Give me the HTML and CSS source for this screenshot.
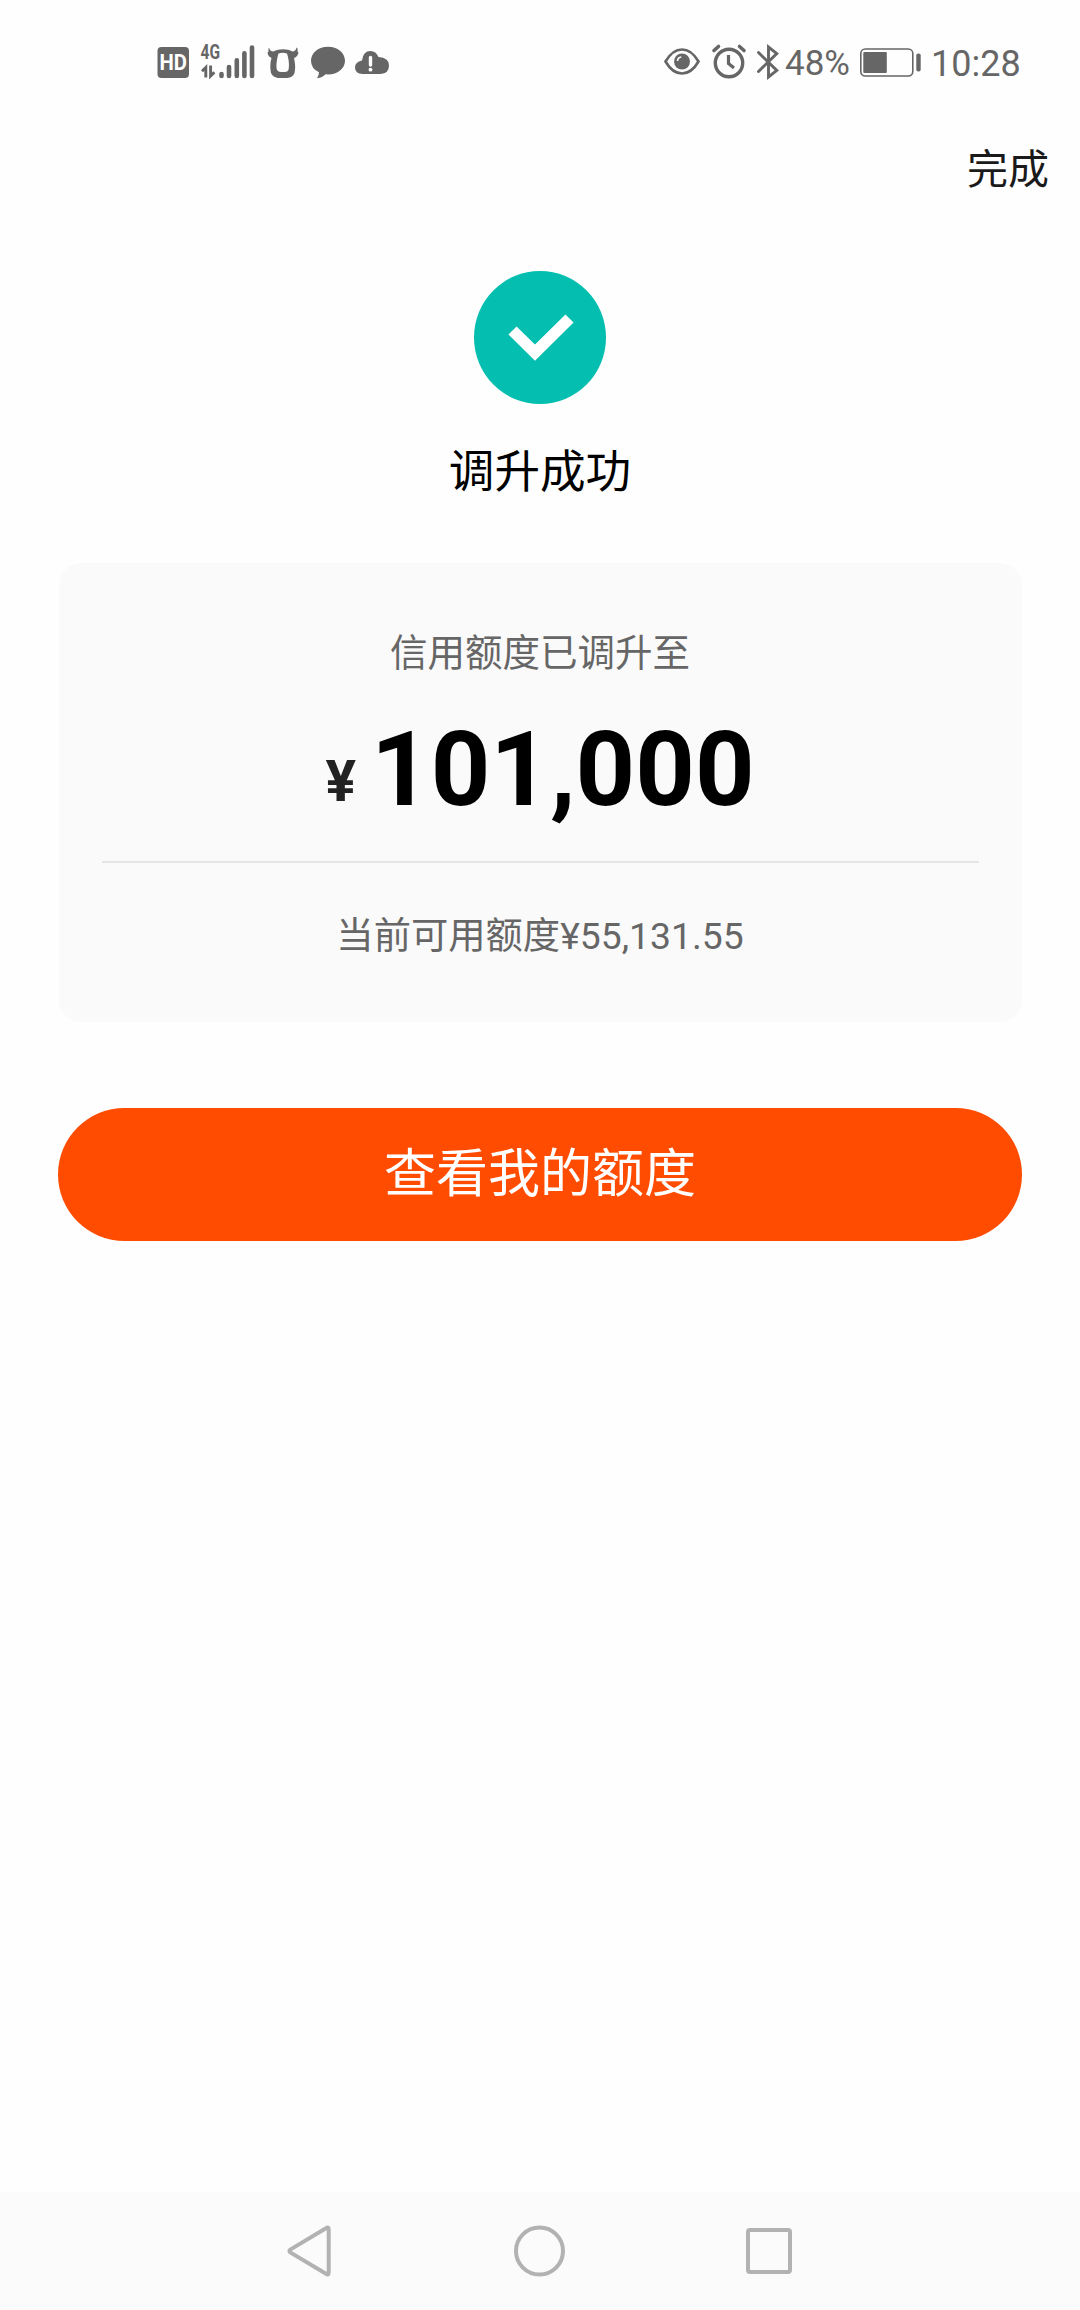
FILE: index.html
```html
<!DOCTYPE html>
<html lang="zh-CN">
<head>
<meta charset="utf-8">
<title>调升成功</title>
<link rel="stylesheet" href="styles.css">
</head>
<body>
<div class="screen">
  <header class="status">
    <div class="status-left">
      <svg class="icon hd" width="32" height="34" viewBox="0 0 32 34"><rect x="0.500" y="2" width="31.500" height="31" rx="4" fill="#666"/><text x="2.500" y="25" font-size="22" textLength="27.500" lengthAdjust="spacingAndGlyphs" fill="#fff">HD</text></svg>
      <svg class="icon signal" width="54" height="34" viewBox="0 0 54 34"><text x="-0.500" y="14.300" font-size="20" textLength="19.500" lengthAdjust="spacingAndGlyphs" fill="#666">4G</text><path d="M4.800 32.500V22.500L1 26.300M9.600 20.500V31L13.400 27.200" fill="none" stroke="#666" stroke-width="2.900"/><g stroke="#666" stroke-width="4.600" stroke-linecap="round"><path d="M20.500 29v2M28 22v9M35.800 15.300V31M43.400 8.300V31M51 2.500V31"/></g></svg>
      <svg class="icon ox" width="32" height="34" viewBox="0 0 32 34"><path fill="#666" fill-rule="evenodd" d="M2 2.500C2.500 5 4 6.500 6.500 6.500C12 3.500 20 3.500 25.500 6.500C27.500 6.500 29 5 29.500 2.500Q31 3 30.500 6.500L31.500 7.500C31 10 29.500 12.500 27 13C28.500 20 28.500 24 27.500 28Q26 32.500 20 33H11Q5.500 32 4 28C3 23 3 18 4.500 13Q1 11.500 0.500 7.500L1.500 6.500Q1 3.500 2 2.500ZM11.500 8.500C10 13 9 20 9.700 24Q10.500 27 14 27H18Q21 27 21.700 24C22.500 19 21.500 13 20 8.500Q15.500 7 11.500 8.500Z"/></svg>
      <svg class="icon chat" width="34" height="34" viewBox="0 0 34 34"><path fill="#666" d="M17 1.700C26.500 1.700 34 7.800 34 15.700S26.500 29.500 17 29.500L14.500 29.300Q11.500 32.700 6 33.300Q8 30.500 8 27.300Q0 23.500 0 15.700C0 7.800 7.500 1.700 17 1.700Z"/></svg>
      <svg class="icon cloud" width="34" height="34" viewBox="0 0 34 34"><path fill="#666" d="M7.500 29Q0 28.500 0 22.500Q0 17 7 15.500Q8 6 15.500 6Q21 6 23.500 12Q34 12.500 34 20.500Q34 28.500 25.500 29Z"/><path d="M15.500 12.500V20" stroke="#fff" stroke-width="3.400" stroke-linecap="round"/><circle cx="15.500" cy="24.700" r="1.900" fill="#fff"/></svg>
    </div>
    <div class="status-right">
      <svg class="icon eye" width="36" height="34" viewBox="0 0 36 34"><path d="M1.500 16.500Q8.500 4.500 18 4.500T34.500 16.500Q27.500 28.500 18 28.500T1.500 16.500Z" fill="none" stroke="#666" stroke-width="2.700"/><circle cx="18" cy="16.500" r="8" fill="#666"/><path d="M13.500 16Q13.800 12.300 17.300 12" fill="none" stroke="#fff" stroke-width="1.600"/></svg>
      <svg class="icon alarm" width="34" height="34" viewBox="0 0 34 34"><circle cx="17" cy="18" r="13.700" fill="none" stroke="#666" stroke-width="3.400"/><path d="M16.500 10V18.500L22 23" fill="none" stroke="#666" stroke-width="3.200"/><path d="M2 5.500L6.500 1.500M27.500 1.500L32 5.500" stroke="#666" stroke-width="3.600" stroke-linecap="round"/></svg>
      <svg class="icon bluetooth" width="22" height="36" viewBox="0 0 22 36"><path d="M1.500 8.500L19.800 26.500L11.500 33V3L19.800 9.500L1.500 27.500" fill="none" stroke="#666" stroke-width="2.900" stroke-linejoin="miter" stroke-linecap="round"/></svg>
      <span class="percent">48%</span>
      <svg class="icon battery" width="62" height="34" viewBox="0 0 62 34"><rect x=".8" y="4" width="52" height="27" rx="4.500" fill="none" stroke="#666" stroke-width="1.600"/><rect x="3.300" y="7" width="23.500" height="21" rx="1" fill="#666"/><rect x="56.300" y="8.500" width="4.400" height="18" rx="2" fill="#666"/></svg>
      <span class="clock">10:28</span>
    </div>
  </header>

  <nav class="topbar"><a class="done">完成</a></nav>

  <main class="content">
    <svg class="success" width="132" height="133" viewBox="0 0 132 133"><ellipse cx="66" cy="66.500" rx="66" ry="66.500" fill="#04beaf"/><path d="M38.500 59.500L61 81.700L95.500 47.500" fill="none" stroke="#fff" stroke-width="11.500"/></svg>
    <h1 class="title">调升成功</h1>
    <section class="card">
      <p class="label">信用额度已调升至</p>
      <p class="amount"><span class="yen">¥</span><span class="value">101,000</span></p>
      <p class="available">当前可用额度¥55,131.55</p>
    </section>
    <button class="primary">查看我的额度</button>
  </main>

  <footer class="navbar">
    <svg width="44" height="52" viewBox="0 0 44 52"><path d="M41.700 4.500V47.500Q41.700 50.500 39 48.800L3.200 27.400Q1.700 26 3.200 24.600L39 3.200Q41.700 1.500 41.700 4.500Z"/></svg>
    <svg width="52" height="52" viewBox="0 0 52 52"><ellipse cx="26.500" cy="26" rx="23.500" ry="23.500"/></svg>
    <svg width="46" height="46" viewBox="0 0 46 46"><rect x="2" y="2" width="42" height="42" rx="2"/></svg>
  </footer>
</div>
</body>
</html>
```
FILE: styles.css
```css
* { box-sizing: border-box; margin: 0; padding: 0; }

body {
  background: #fefefe;
  font-family: Roboto, "Noto Sans CJK SC", sans-serif;
  color: #000;
}

.screen {
  width: 1080px;
  height: 2310px;
  display: flex;
  flex-direction: column;
}

.status {
  height: 124px;
  padding: 45px 61px 0 157px;
  display: flex;
  justify-content: space-between;
  align-items: flex-start;
  color: #666;
}

.status-left, .status-right { display: flex; height: 34px; }
.icon { flex: none; display: block; overflow: visible; }
.icon text { font-weight: 700; }
.signal { margin-left: 12px; }
.ox { margin-left: 12px; }
.chat { margin-left: 12px; }
.cloud { margin-left: 10px; }
.alarm { margin-left: 12px; }
.bluetooth { margin-left: 11px; margin-top: -1px; }
.percent { width: 66px; margin-left: 6px; font-size: 35px; line-height: 38px; }
.battery { margin-left: 9px; }
.clock { width: 88px; margin-left: 9px; font-size: 36px; line-height: 38px; white-space: nowrap; }

.topbar {
  height: 92px;
  display: flex;
  justify-content: flex-end;
  padding: 16px 31px 0 0;
}
.done { font-size: 41px; line-height: 60px; color: #1a1a1a; }

.content {
  flex: 1;
  display: flex;
  flex-direction: column;
  align-items: center;
  padding: 55px 58px 0;
}
.success { flex: none; display: block; }
.title {
  margin-top: 36px;
  font-size: 45.6px;
  line-height: 66px;
  font-weight: 400;
}

.card {
  width: 963px;
  height: 459px;
  margin-top: 57px;
  padding: 63px 43px 0;
  border-radius: 22px;
  background: #fafafa;
  display: flex;
  flex-direction: column;
  text-align: center;
  color: #666;
}
.label { font-size: 37.5px; line-height: 54px; }
.amount {
  height: 183px;
  border-bottom: 2px solid #e5e5e5;
  display: flex;
  justify-content: center;
  align-items: flex-start;
  font-weight: 700;
}
.yen { margin-top: 72px; font-size: 57px; line-height: 60px; color: #222; }
.value { margin-left: 15px; font-size: 104px; line-height: 180px; color: #000; }
.available { margin-top: 46px; font-size: 37.3px; line-height: 54px; }

.primary {
  width: 964px;
  height: 133px;
  margin-top: 86px;
  border: 0;
  border-radius: 67px;
  background: #ff4c00;
  color: #fff;
  font: 400 52px/133px Roboto, "Noto Sans CJK SC", sans-serif;
}

.navbar {
  height: 118px;
  padding: 0 288px 0 287px;
  background: #fbfbfb;
  display: flex;
  align-items: center;
  justify-content: space-between;
}
.navbar svg { fill: none; stroke: #b2b2b2; stroke-width: 4; stroke-linejoin: round; }
```
